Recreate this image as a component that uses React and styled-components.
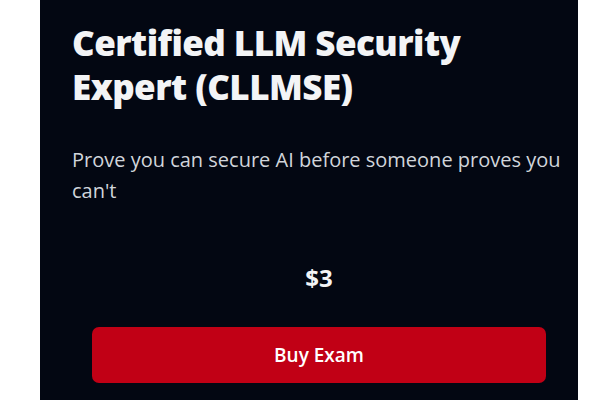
import React from "react";
import styled, { createGlobalStyle } from "styled-components";

const Global = createGlobalStyle`
  html, body { margin: 0; padding: 0; background: #ffffff; }
  body { font-family: "Open Sans", "Noto Sans", sans-serif; }
`;

const Page = styled.div`
  display: flex;
  padding-left: 40px;
`;

const Panel = styled.section`
  width: 538px;
  height: 400px;
  box-sizing: border-box;
  background: #030712;
  padding: 21px 12px 0 32px;
  display: flex;
  flex-direction: column;
  overflow: hidden;
`;

const Title = styled.h1`
  margin: 0;
  font-size: 35px;
  line-height: 44px;
  font-weight: 800;
  letter-spacing: -0.55px;
  color: #f3f4f6;
`;

const Subtitle = styled.p`
  margin: 35px 0 0;
  font-size: 20px;
  line-height: 31px;
  color: #d1d5db;
`;

const Price = styled.div`
  margin-top: 56px;
  text-align: center;
  font-size: 24px;
  line-height: 32px;
  font-weight: 700;
  color: #f3f4f6;
`;

const BuyButton = styled.button`
  margin: 33px 20px 0;
  height: 56px;
  border: none;
  border-radius: 7px;
  background: #c10015;
  color: #ffffff;
  font-family: inherit;
  font-size: 19px;
  font-weight: 600;
  cursor: pointer;
`;

export default function App() {
  return (
    <>
      <Global />
      <Page>
        <Panel>
          <Title>Certified LLM Security Expert (CLLMSE)</Title>
          <Subtitle>Prove you can secure AI before someone proves you can't</Subtitle>
          <Price>$3</Price>
          <BuyButton>Buy Exam</BuyButton>
        </Panel>
      </Page>
    </>
  );
}
